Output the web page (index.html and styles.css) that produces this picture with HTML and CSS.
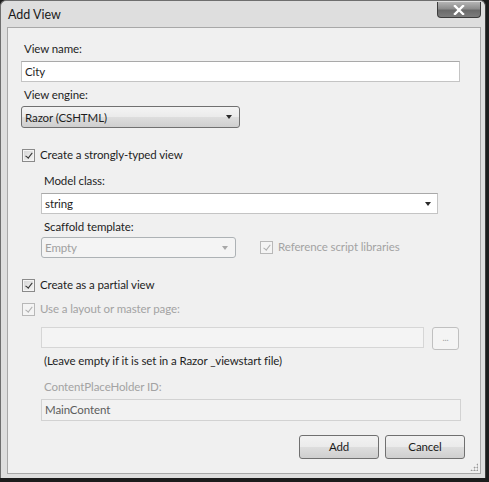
FILE: index.html
```html
<!DOCTYPE html>
<html>
<head>
<meta charset="utf-8">
<link rel="stylesheet" href="styles.css">
</head>
<body>
<div class="window">
  <div class="titlebar">
    <span class="title">Add View</span>
    <div class="close"><svg width="12" height="10" viewBox="0 0 12 10"><path d="M2 1 L10 9 M10 1 L2 9" stroke="#fff" stroke-width="2.4" stroke-linecap="square"/></svg></div>
  </div>
  <div class="client">
    <div class="lbl">View name:</div>
    <div class="textbox w-full m4">City</div>
    <div class="lbl m5">View engine:</div>
    <div class="select w-engine m3"><span>Razor (CSHTML)</span><i class="arrow"></i></div>

    <div class="check-row m19">
      <span class="cb checked"></span><span>Create a strongly-typed view</span>
    </div>
    <div class="indent">
      <div class="lbl m10">Model class:</div>
      <div class="textbox combo w-model m4"><span>string</span><i class="arrow"></i></div>
      <div class="lbl m5">Scaffold template:</div>
      <div class="scaffold-row m2">
        <div class="select disabled w-scaffold"><span>Empty</span><i class="arrow"></i></div>
        <div class="check-row disabled">
          <span class="cb checked"></span><span>Reference script libraries</span>
        </div>
      </div>
    </div>

    <div class="check-row m19">
      <span class="cb checked"></span><span>Create as a partial view</span>
    </div>
    <div class="check-row disabled m8">
      <span class="cb checked"></span><span>Use a layout or master page:</span>
    </div>
    <div class="indent">
      <div class="layout-row m10">
        <div class="textbox disabled w-layout"></div>
        <div class="btn-browse">...</div>
      </div>
      <div class="lbl note m3">(Leave empty if it is set in a Razor _viewstart file)</div>
      <div class="lbl disabled-text m10">ContentPlaceHolder ID:</div>
      <div class="textbox readonly m4">MainContent</div>
    </div>

    <div class="footer">
      <div class="btn">Add</div>
      <div class="btn">Cancel</div>
    </div>
    <div class="grip"></div>
  </div>
</div>
</body>
</html>
```
FILE: styles.css
```css
html, body {
  margin: 0;
  padding: 0;
}
body {
  background: #1c1c1c;
  width: 489px;
  height: 482px;
  overflow: hidden;
  font-family: Lato, "Open Sans", sans-serif;
  font-size: 11.5px;
  letter-spacing: -0.1px;
  color: #1e1e1e;
}
.window {
  width: 486px;
  height: 478px;
  box-sizing: border-box;
  background: #dedede;
  border: 1px solid #6e6e6e;
  border-right-color: #404040;
  border-bottom: none;
  border-radius: 6px 6px 0 0;
  display: flex;
  flex-direction: column;
  padding: 0 4px 4px 6px;
}
.titlebar {
  height: 26px;
  display: flex;
  justify-content: space-between;
  align-items: center;
  padding-left: 1px;
}
.title {
  font-size: 12.5px;
  letter-spacing: 0;
  color: #1a1a1a;
}
.close {
  align-self: flex-start;
  margin-top: 1px;
  width: 44px;
  height: 16px;
  box-sizing: border-box;
  border: 1px solid #3c3c3c;
  border-top: none;
  border-radius: 0 0 4px 4px;
  background: linear-gradient(#b4b4b4 0%, #8c8c8c 45%, #6a6a6a 55%, #7c7c7c 100%);
  display: flex;
  align-items: center;
  justify-content: center;
}
.client {
  position: relative;
  flex: 1;
  box-sizing: border-box;
  background: #f0f0f0;
  border: 1px solid #a8a8a8;
  padding: 13px 19px 0 13px;
  display: flex;
  flex-direction: column;
  align-items: flex-start;
}
.lbl {
  line-height: 16px;
  height: 16px;
  padding-left: 3px;
  white-space: nowrap;
}
.m2 { margin-top: 2px; }
.m3 { margin-top: 3px; }
.m4 { margin-top: 4px; }
.m5 { margin-top: 5px; }
.m8 { margin-top: 8px; }
.m10 { margin-top: 10px; }
.m19 { margin-top: 19px; }

.textbox {
  box-sizing: border-box;
  height: 21px;
  background: #fff;
  border: 1px solid #c4c4c4;
  border-top-color: #a9a9a9;
  padding: 0 3px;
  line-height: 19px;
  white-space: nowrap;
}
.w-full { width: 439px; }
.w-model { width: 397px; }
.w-layout { width: 383px; }
.combo {
  display: flex;
  justify-content: space-between;
  align-items: center;
  padding-right: 6px;
}
.arrow {
  display: block;
  width: 0;
  height: 0;
  border-left: 3.5px solid transparent;
  border-right: 3.5px solid transparent;
  border-top: 4px solid #2a2a2a;
}
.select {
  box-sizing: border-box;
  height: 22px;
  border: 1px solid #707070;
  border-radius: 3px;
  background: linear-gradient(#f4f4f4 0%, #ebebeb 48%, #dddddd 52%, #cfcfcf 100%);
  display: flex;
  justify-content: space-between;
  align-items: center;
  padding: 0 7px 0 3px;
  white-space: nowrap;
}
.w-engine { width: 219px; }
.w-scaffold { width: 195px; height: 21px; }
.select.disabled {
  background: #f4f4f4;
  border-color: #adb2b5;
  color: #a0a0a0;
}
.select.disabled .arrow { border-top-color: #a8a8a8; }

.check-row {
  display: flex;
  align-items: center;
  height: 16px;
  line-height: 16px;
  padding-left: 1px;
  white-space: nowrap;
}
.cb {
  width: 13px;
  height: 13px;
  box-sizing: border-box;
  border: 1px solid #8a8a8a;
  background: linear-gradient(135deg, #d4d4d4, #f6f6f6);
  box-shadow: inset 0 0 0 1px #f4f4f4;
  margin-right: 5px;
  position: relative;
}
.cb.checked::after {
  content: "";
  position: absolute;
  left: 3.5px;
  top: 1px;
  width: 2.5px;
  height: 6px;
  border: solid #333;
  border-width: 0 1.6px 1.6px 0;
  transform: rotate(38deg);
}
.check-row.disabled { color: #a3a3a3; }
.check-row.disabled .cb { border-color: #b8b8b8; background: #f4f4f4; }
.check-row.disabled .cb.checked::after { border-color: #b0b0b0; }

.indent {
  padding-left: 20px;
  display: flex;
  flex-direction: column;
  align-items: flex-start;
  align-self: stretch;
}
.scaffold-row {
  display: flex;
  align-items: center;
  gap: 23px;
}
.scaffold-row .check-row { margin-top: -1px; }
.layout-row {
  display: flex;
  gap: 8px;
  align-items: flex-start;
}
.textbox.disabled {
  background: #f4f4f4;
  border-color: #d6d6d6;
}
.btn-browse {
  box-sizing: border-box;
  width: 27px;
  height: 23px;
  border: 1px solid #c0c0c0;
  border-radius: 3px;
  background: #f4f4f4;
  color: #a0a0a0;
  font-size: 9px;
  text-align: center;
  line-height: 20px;
}
.note { color: #1e1e1e; }
.disabled-text { color: #a3a3a3; }
.textbox.readonly {
  align-self: stretch;
  height: 22px;
  background: #f2f2f2;
  border-color: #d2d2d2;
  color: #5c5c5c;
  line-height: 20px;
}
.footer {
  align-self: stretch;
  margin-top: 14px;
  margin-right: -4px;
  display: flex;
  justify-content: flex-end;
  gap: 6px;
}
.btn {
  box-sizing: border-box;
  width: 80px;
  height: 24px;
  border: 1px solid #707070;
  border-radius: 3px;
  background: linear-gradient(#f2f2f2 0%, #ebebeb 48%, #dddddd 52%, #cfcfcf 100%);
  text-align: center;
  line-height: 22px;
  color: #1a1a1a;
}
.grip {
  position: absolute;
  right: 2px;
  bottom: 2px;
  width: 8px;
  height: 8px;
  background-image: radial-gradient(circle, #9a9a9a 0.8px, transparent 1.2px);
  background-size: 3px 3px;
  clip-path: polygon(100% 0, 100% 100%, 0 100%);
}
```
